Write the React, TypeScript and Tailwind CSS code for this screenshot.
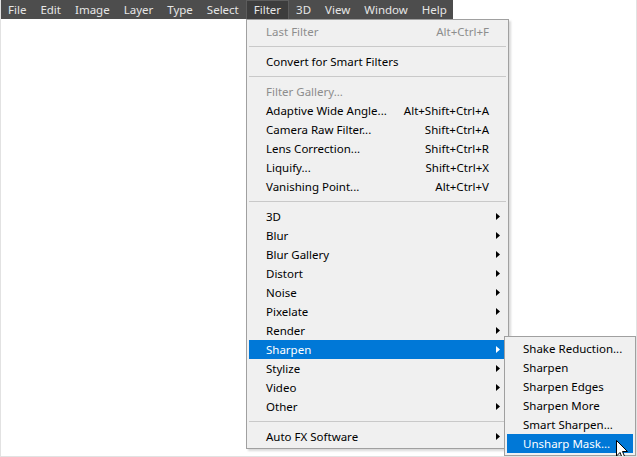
import React from 'react';

type Row =
  | { kind: 'sep' }
  | { kind: 'item'; label: string; shortcut?: string; disabled?: boolean; sub?: boolean; active?: boolean };

const menuBar = ['File', 'Edit', 'Image', 'Layer', 'Type', 'Select', 'Filter', '3D', 'View', 'Window', 'Help'];

const filterRows: Row[] = [
  { kind: 'item', label: 'Last Filter', shortcut: 'Alt+Ctrl+F', disabled: true },
  { kind: 'sep' },
  { kind: 'item', label: 'Convert for Smart Filters' },
  { kind: 'sep' },
  { kind: 'item', label: 'Filter Gallery...', disabled: true },
  { kind: 'item', label: 'Adaptive Wide Angle...', shortcut: 'Alt+Shift+Ctrl+A' },
  { kind: 'item', label: 'Camera Raw Filter...', shortcut: 'Shift+Ctrl+A' },
  { kind: 'item', label: 'Lens Correction...', shortcut: 'Shift+Ctrl+R' },
  { kind: 'item', label: 'Liquify...', shortcut: 'Shift+Ctrl+X' },
  { kind: 'item', label: 'Vanishing Point...', shortcut: 'Alt+Ctrl+V' },
  { kind: 'sep' },
  { kind: 'item', label: '3D', sub: true },
  { kind: 'item', label: 'Blur', sub: true },
  { kind: 'item', label: 'Blur Gallery', sub: true },
  { kind: 'item', label: 'Distort', sub: true },
  { kind: 'item', label: 'Noise', sub: true },
  { kind: 'item', label: 'Pixelate', sub: true },
  { kind: 'item', label: 'Render', sub: true },
  { kind: 'item', label: 'Sharpen', sub: true, active: true },
  { kind: 'item', label: 'Stylize', sub: true },
  { kind: 'item', label: 'Video', sub: true },
  { kind: 'item', label: 'Other', sub: true },
  { kind: 'sep' },
  { kind: 'item', label: 'Auto FX Software', sub: true },
];

const sharpenItems = ['Shake Reduction...', 'Sharpen', 'Sharpen Edges', 'Sharpen More', 'Smart Sharpen...', 'Unsharp Mask...'];

function Arrow({ white }: { white?: boolean }) {
  return (
    <svg width="4" height="7" viewBox="0 0 4 7" className="shrink-0">
      <path d="M0 0 L4 3.5 L0 7 Z" fill={white ? '#ffffff' : '#000000'} />
    </svg>
  );
}

function Cursor() {
  return (
    <svg width="13" height="20" viewBox="0 0 13 20" className="absolute left-[615px] top-[440px]">
      <path
        d="M0.5 0.5 L0.5 16 L4 12.5 L6.5 18.5 L9 17.5 L6.5 11.5 L11.5 11.5 Z"
        fill="#ffffff"
        stroke="#000000"
        strokeWidth="1"
        strokeLinejoin="miter"
      />
    </svg>
  );
}

export default function App() {
  return (
    <div
      className="relative w-[637px] h-[457px] overflow-hidden bg-white border-l border-b border-r border-[#e2e2e2] text-[11.5px] leading-none"
      style={{ fontFamily: '"Noto Sans", "Open Sans", sans-serif' }}
    >
      {/* menu bar */}
      <div className="flex h-[19px] w-[452px] bg-[#4d4d4d] text-[#e6e6e6]">
        {menuBar.map((m) => (
          <div
            key={m}
            className={`flex items-center px-[7px] ${m === 'Filter' ? 'bg-[#3d3d3d] border-x border-t border-[#5c5c5c]' : ''}`}
          >
            {m}
          </div>
        ))}
      </div>

      {/* Filter dropdown */}
      <div className="absolute left-[245px] top-[19px] w-[263px] bg-[#f0f0f0] border border-[#a0a0a0] py-[2px] px-[2px] shadow-[2px_2px_2px_rgba(0,0,0,0.15)]">
        {filterRows.map((r, i) =>
          r.kind === 'sep' ? (
            <div key={i} className="h-[11px] flex items-center">
              <div className="h-px w-full bg-[#c9c9c9]" />
            </div>
          ) : (
            <div
              key={i}
              className={`h-[19px] flex items-center pl-[17px] pr-[6px] ${
                r.active ? 'bg-[#0078d7] text-white' : r.disabled ? 'text-[#8d8d8d]' : 'text-black'
              }`}
            >
              <span className="flex-1 whitespace-nowrap">{r.label}</span>
              {r.shortcut && <span className="whitespace-nowrap pr-[11px]">{r.shortcut}</span>}
              {r.sub && <Arrow white={r.active} />}
            </div>
          )
        )}
      </div>

      {/* Sharpen submenu */}
      <div className="absolute left-[503px] top-[336px] w-[132px] bg-[#f0f0f0] border border-[#a0a0a0] py-[2px] px-[2px]">
        {sharpenItems.map((s, i) => (
          <div
            key={s}
            className={`h-[19px] flex items-center pl-[16px] whitespace-nowrap ${
              i === sharpenItems.length - 1 ? 'bg-[#0078d7] text-white' : 'text-black'
            }`}
          >
            {s}
          </div>
        ))}
      </div>

      <Cursor />
    </div>
  );
}
